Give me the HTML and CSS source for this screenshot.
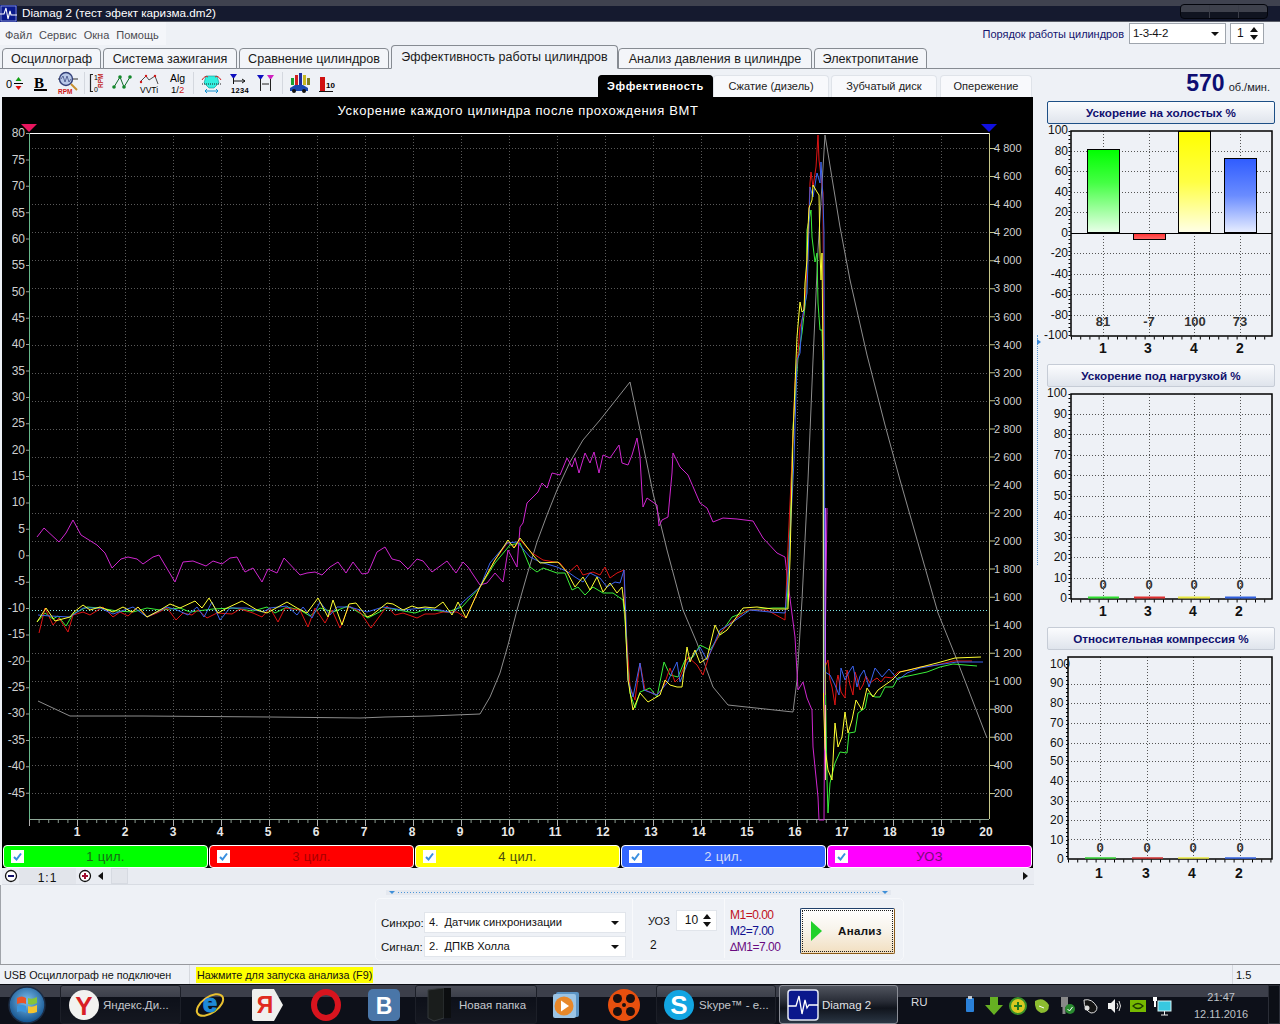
FILE: index.html
```html
<!DOCTYPE html>
<html lang="ru">
<head>
<meta charset="utf-8">
<title>Diamag 2</title>
<link rel="stylesheet" href="styles.css">
</head>
<body>
<header class="titlebar">
  <svg class="app-icon" width="17" height="17" viewBox="0 0 17 17"><rect width="17" height="17" fill="#0a1a8c"/><rect x="1" y="1" width="15" height="15" fill="none" stroke="#c8d0f0" stroke-width=".6"/><path d="M0 9H4L6 3L8 14L10 6L11 10H17" fill="none" stroke="#fff" stroke-width="1.1"/></svg>
  <span class="title-text">Diamag 2 (тест эфект каризма.dm2)</span>
  <div class="win-controls"><i></i><i></i><i></i></div>
</header>

<div class="menubar">
  <nav class="menu"><span>Файл</span><span>Сервис</span><span>Окна</span><span>Помощь</span></nav>
  <div class="order">
    <span class="order-label">Порядок работы цилиндров</span>
    <div class="combo combo-order">1-3-4-2<b class="caret"></b></div>
    <div class="spin spin-order">1<span class="spin-arrows"><b></b><b></b></span></div>
  </div>
</div>

<div class="tabs">
  <span class="tab t1">Осциллограф</span>
  <span class="tab t2">Система зажигания</span>
  <span class="tab t3">Сравнение цилиндров</span>
  <span class="tab active t4">Эффективность работы цилиндров</span>
  <span class="tab t5">Анализ давления в цилиндре</span>
  <span class="tab t6">Электропитание</span>
</div>

<div class="toolbar">
  <svg class="tool-icons" width="598" height="28" viewBox="0 69 598 28" font-family="Liberation Sans, sans-serif">
    <path d="M84.5 72V94M193.5 72V94M282.5 72V94" stroke="#d4d8df"/>
    <text x="6" y="88" font-size="11">0</text>
    <path d="M14 83.5H23" stroke="#000"/><path d="M18.5 77L15.5 81H21.5Z" fill="#12a012"/><path d="M18.5 90L15.5 86H21.5Z" fill="#e01010"/>
    <text x="34" y="88" font-size="15" font-weight="bold" font-family="Liberation Serif, serif">B</text><rect x="34" y="89" width="13" height="2" fill="#000"/>
    <path d="M58 79H78" stroke="#333"/><circle cx="66" cy="79" r="6.5" fill="#b8c8e8" stroke="#33407a" stroke-width="1.4"/><path d="M61 79L63 76L65 82L67 76L69 82L71 79" fill="none" stroke="#33407a" stroke-width=".7"/><path d="M71 84L77 90" stroke="#c89030" stroke-width="2"/>
    <text x="58" y="94" font-size="6.5" fill="#d01818" font-weight="bold">RPM</text>
    <path d="M93 74.5H90.5V91.5H93" fill="none" stroke="#222" stroke-width="1.2"/><text x="94" y="80" font-size="7">1</text><text x="94" y="92" font-size="7">0</text>
    <text transform="translate(103 88) rotate(-90)" font-size="6.5" fill="#c01818" font-weight="bold">RPM</text>
    <path d="M114 87L120 77L124 87L130 77" fill="none" stroke="#0f6a2a"/><g fill="#12882a"><circle cx="114" cy="87" r="1.8"/><circle cx="120" cy="77" r="1.8"/><circle cx="124" cy="87" r="1.8"/><circle cx="130" cy="77" r="1.8"/></g>
    <path d="M140 82L146 76L149 80L155 76L158 84" fill="none" stroke="#222" stroke-width=".8"/><g fill="#d01818"><circle cx="141" cy="82" r="1.2"/><circle cx="146" cy="76" r="1.2"/><circle cx="155" cy="76" r="1.2"/></g>
    <text x="140" y="93" font-size="8.5">VVTi</text>
    <text x="170" y="82" font-size="10.5">Alg</text><text x="171" y="93" font-size="9.5">1/<tspan fill="#d01818">2</tspan></text>
    <path d="M206 76H217L219 83L214 88H209L204 83Z" fill="#30f0e0" stroke="#0a9090" stroke-width=".6"/><path d="M202 80Q205 75 208 77M215 77Q218 75 221 80" fill="none" stroke="#d02020"/><path d="M202 84H221" stroke="#222" stroke-dasharray="1 1"/><path d="M205 91H218M205 91L207 89M205 91L207 93M218 91L216 89M218 91L216 93" stroke="#1090d0" fill="none"/>
    <path d="M230 74H237L233.500 79Z" fill="#1010c0"/><path d="M233.500 78V84" stroke="#111"/><path d="M234 81H245M245 81L242 79M245 81L242 83" stroke="#111" fill="none"/>
    <text x="231" y="93" font-size="7.500" font-weight="bold" letter-spacing=".3">1234</text>
    <path d="M257 75H264L260.500 80Z" fill="#1010c0"/><path d="M267 75H274L270.500 80Z" fill="#d020c0"/><path d="M260.500 79V91M270.500 79V91M262 84H269" stroke="#222" fill="none"/>
    <g><rect x="291" y="78" width="3" height="7" fill="#18a030"/><rect x="295" y="75" width="3" height="10" fill="#d02020"/><rect x="299" y="73" width="3" height="12" fill="#2030a0"/><rect x="303" y="75" width="3" height="10" fill="#c8b820"/><rect x="307" y="78" width="3" height="7" fill="#808020"/></g>
    <path d="M290 91V88L295 85H303L308 88V91Z" fill="#1848b0"/><circle cx="294" cy="91" r="2" fill="#111"/><circle cx="304" cy="91" r="2" fill="#111"/>
    <rect x="320" y="77" width="5" height="14" fill="#d01010"/><text x="326" y="88" font-size="8" font-weight="bold">10</text><path d="M319 91.500H333" stroke="#111"/>
  </svg>
  <div class="subtabs">
    <span class="subtab on st1">Эффективность</span>
    <span class="subtab st2">Сжатие (дизель)</span>
    <span class="subtab st3">Зубчатый диск</span>
    <span class="subtab st4">Опережение</span>
  </div>
  <div class="rpm"><b>570</b><span>об./мин.</span></div>
</div>

<main class="workspace">
  <section class="left">
    <div class="scope">
      <svg class="scope-plot" width="1031" height="748" viewBox="2 97 1031 748" font-family="Liberation Sans, sans-serif">
        <text x="518" y="115" class="chart-title" text-anchor="middle">Ускорение каждого цилиндра после прохождения ВМТ</text>
        <path class="grid" d="M29 148.500H989M29 176.500H989M29 204.500H989M29 232.500H989M29 260.500H989M29 288.500H989M29 316.500H989M29 345.500H989M29 373.500H989M29 401.500H989M29 429.500H989M29 457.500H989M29 485.500H989M29 513.500H989M29 541.500H989M29 569.500H989M29 597.500H989M29 625.500H989M29 653.500H989M29 681.500H989M29 709.500H989M29 737.500H989M29 765.500H989M29 793.500H989M77.500 133V819M125.500 133V819M173.500 133V819M221.500 133V819M269.500 133V819M317.500 133V819M365.500 133V819M413.500 133V819M461.500 133V819M509.500 133V819M557.500 133V819M605.500 133V819M653.500 133V819M701.500 133V819M749.500 133V819M797.500 133V819M845.500 133V819M893.500 133V819M941.500 133V819"/>
        <path d="M29 610.500H989" stroke="#7fe8e8" stroke-dasharray="1 2"/>
        <path d="M29 133.500H989" stroke="#fff"/>
        <path d="M29.500 133V819" stroke="#66b88a"/>
        <path d="M989.500 133V819" stroke="#c8c88a"/>
        <path d="M29 819.500H989" stroke="#8fa898"/>
        <path d="M29 821.500H989" stroke="#8a9a90" stroke-width="3" stroke-dasharray="1 8.600"/>
        <path d="M29 823H989" stroke="#b0b0b0" stroke-width="6" stroke-dasharray="1 47" stroke-dashoffset="-48"/>
        <path d="M27.500 133V795" stroke="#9a9a9a" stroke-width="3" stroke-dasharray="1 25.390"/>
        <path d="M992 148V795" stroke="#c8c88a" stroke-width="6" stroke-dasharray="1 27.040"/>
        <path d="M21 124H37L29 132Z" fill="#e8155e"/>
        <path d="M981 124H997L989 132Z" fill="#1010e0"/>

        <polyline class="ln gray" points="38,701 70,716 143,716 270,717 360,718 385,717 430,716 480,714 490,697 500,673 508,645 517,610 527,575 537,542 547,515 557,490 570,462 583,440 600,420 630,382 640,430 653,493 667,550 683,610 697,643 713,687 728,705 793,712 797,680 802,600 808,480 813,360 818,250 825,135 840,227 850,280 867,355 885,425 900,480 938,613 955,655 987,738"/>
        <polyline class="ln mag" points="37,537 44,528 59,542 66,533 73,520 81,535 97,545 105,553 112,568 121,559 128,557 137,559 143,564 153,557 159,555 175,582 183,562 193,561 206,566 213,561 222,564 230,558 237,557 245,572 253,568 262,582 268,569 277,573 284,558 300,575 307,573 315,572 322,575 330,567 338,562 346,573 353,562 362,574 368,573 377,552 385,547 392,559 400,561 408,569 417,559 423,561 432,572 447,561 456,573 463,562 468,567 480,585 487,583 495,573 503,582 508,550 517,567 520,527 523,523 527,503 538,492 542,483 547,488 552,473 560,475 567,458 572,467 575,458 579,473 585,453 590,463 594,452 599,473 603,455 610,458 619,445 622,463 628,465 632,455 637,438 640,457 642,493 643,507 647,498 657,505 659,526 662,520 668,517 672,473 673,453 680,467 688,475 700,503 707,508 713,522 723,518 737,519 753,521 763,538 777,553 785,557 788,583 795,637 798,690 803,682 807,698 812,710 813,747 818,797 819,820 824,820 825,660 827,508"/>
        <polyline class="ln grn" points="37,622 45,613 53,619 58,616 66,626 73,614 87,607 100,608 117,611 133,612 147,608 160,610 180,608 190,612 213,609 233,608 253,611 267,607 275,613 287,607 300,610 310,616 320,608 333,612 348,606 368,618 387,608 415,613 427,609 447,612 462,607 480,587 495,563 510,545 520,543 530,567 537,572 543,568 557,573 565,573 572,590 578,587 585,595 593,587 603,593 613,593 623,600 625,620 627,653 630,693 635,708 640,692 650,688 657,697 664,662 670,675 678,677 685,660 693,657 700,645 710,650 723,630 732,617 750,610 773,608 787,608 790,527 793,427 798,358 802,333 806,297 807,230 811,210 812,237 815,262 817,253 818,303 820,330 822,330 823,360 824,600 827,780 828,813 830,783 835,763 840,752 847,753 849,733 855,732 858,713 865,708 868,693 875,697 880,697 885,687 893,687 898,678 913,675 927,672 940,667 953,664 977,666"/>
        <polyline class="ln red" points="39,633 45,608 53,625 59,618 68,632 73,615 83,612 90,615 103,607 113,617 120,612 128,616 138,607 147,617 157,613 167,608 176,620 183,613 192,615 198,610 207,618 217,613 232,614 240,609 253,613 262,617 270,608 278,622 285,608 300,610 308,627 315,608 325,623 332,610 340,628 349,606 360,612 371,628 387,606 395,615 403,613 417,618 425,614 435,614 443,612 457,612 466,618 480,587 495,560 508,542 515,547 520,540 532,553 543,560 560,563 568,573 577,565 583,575 593,572 600,575 605,567 610,578 617,573 624,570 625,613 627,643 630,687 635,700 640,663 645,690 657,695 663,688 670,668 675,682 680,677 688,657 697,665 703,675 710,653 720,633 730,623 747,610 767,610 785,620 788,547 792,460 795,383 798,353 800,327 803,317 806,287 807,262 810,183 811,172 813,187 816,167 818,135 819,160 823,193 824,450 825,667 828,660 830,680 832,687 835,705 837,680 838,675 841,692 845,698 847,670 850,685 853,695 855,672 857,678 860,690 863,685 866,676 870,683 874,680 877,678 881,682 885,677 892,678 898,672 910,670 920,667 937,665 953,661 972,661"/>
        <polyline class="ln blu" points="38,615 50,616 70,617 83,608 100,608 113,614 133,607 147,617 167,607 177,610 188,615 197,607 204,617 212,602 220,620 230,608 247,608 263,612 270,608 287,606 297,615 303,607 312,618 320,602 330,615 337,607 350,607 367,612 383,607 403,610 423,608 440,610 453,613 463,602 480,587 490,563 507,543 517,542 530,557 540,562 557,567 568,572 575,577 583,582 590,573 600,578 607,587 615,582 620,583 624,570 626,620 628,680 633,697 640,663 644,690 657,695 667,683 677,662 680,682 688,662 700,647 707,660 720,630 733,622 750,610 770,612 785,613 788,577 794,460 797,360 800,353 802,320 807,293 808,260 810,187 813,197 817,173 820,183 821,162 823,200 824,233 825,672 830,675 835,685 839,695 841,668 845,680 849,672 853,666 857,687 860,676 864,670 869,687 875,668 882,677 889,669 898,680 907,673 920,668 937,665 957,662 983,662"/>
        <polyline class="ln yel" points="37,622 46,608 55,621 70,617 74,612 83,605 90,610 100,607 113,612 123,607 132,612 138,607 147,617 160,610 170,604 180,608 195,601 202,608 209,598 218,613 227,608 242,601 257,610 267,613 287,602 297,608 307,613 318,598 328,617 333,600 342,625 349,604 356,603 367,617 372,615 387,603 393,604 403,610 412,606 418,608 425,607 435,608 443,602 452,615 458,602 466,618 480,587 495,560 508,540 514,548 520,538 533,555 540,563 558,562 567,572 575,587 583,577 590,590 597,577 603,592 610,583 617,593 622,587 625,613 626,637 628,680 633,710 640,693 648,702 660,695 665,680 670,685 677,687 682,687 687,647 690,662 695,650 700,663 707,658 715,625 720,635 727,630 733,622 743,608 757,607 773,609 788,609 790,560 793,437 796,360 797,337 800,302 802,312 804,310 805,283 807,260 808,228 809,208 812,200 813,185 817,192 819,195 820,253 821,280 822,253 823,360 823.500,700 825,748 828,770 832,780 835,723 838,747 842,737 845,712 848,733 852,720 856,700 862,710 867,688 873,697 878,690 885,685 892,680 900,672 917,668 937,663 955,658 981,657"/>
        <path d="M823.500 360V693" stroke="#c4e8a8"/>
        <path d="M825.500 508V663" stroke="#c060f8"/>
        <path d="M825.500 663V695" stroke="#b0b060"/>
        <path d="M825.500 705V780" stroke="#ffc4a4"/>

        <g class="ax-l" text-anchor="end">
          <text x="25" y="137">80</text><text x="25" y="164">75</text><text x="25" y="190">70</text><text x="25" y="217">65</text><text x="25" y="243">60</text><text x="25" y="269">55</text><text x="25" y="296">50</text><text x="25" y="322">45</text><text x="25" y="348">40</text><text x="25" y="375">35</text><text x="25" y="401">30</text><text x="25" y="427">25</text><text x="25" y="454">20</text><text x="25" y="480">15</text><text x="25" y="506">10</text><text x="25" y="533">5</text><text x="25" y="559">0</text><text x="25" y="585">-5</text><text x="25" y="612">-10</text><text x="25" y="638">-15</text><text x="25" y="665">-20</text><text x="25" y="691">-25</text><text x="25" y="717">-30</text><text x="25" y="744">-35</text><text x="25" y="770">-40</text><text x="25" y="797">-45</text>
        </g>
        <g class="ax-r">
          <text x="994" y="152">4 800</text><text x="994" y="180">4 600</text><text x="994" y="208">4 400</text><text x="994" y="236">4 200</text><text x="994" y="264">4 000</text><text x="994" y="292">3 800</text><text x="994" y="321">3 600</text><text x="994" y="349">3 400</text><text x="994" y="377">3 200</text><text x="994" y="405">3 000</text><text x="994" y="433">2 800</text><text x="994" y="461">2 600</text><text x="994" y="489">2 400</text><text x="994" y="517">2 200</text><text x="994" y="545">2 000</text><text x="994" y="573">1 800</text><text x="994" y="601">1 600</text><text x="994" y="629">1 400</text><text x="994" y="657">1 200</text><text x="994" y="685">1 000</text><text x="994" y="713">800</text><text x="994" y="741">600</text><text x="994" y="769">400</text><text x="994" y="797">200</text>
        </g>
        <g class="ax-b" text-anchor="middle">
          <text x="77" y="836">1</text><text x="125" y="836">2</text><text x="173" y="836">3</text><text x="220" y="836">4</text><text x="268" y="836">5</text><text x="316" y="836">6</text><text x="364" y="836">7</text><text x="412" y="836">8</text><text x="460" y="836">9</text><text x="508" y="836">10</text><text x="555" y="836">11</text><text x="603" y="836">12</text><text x="651" y="836">13</text><text x="699" y="836">14</text><text x="747" y="836">15</text><text x="795" y="836">16</text><text x="842" y="836">17</text><text x="890" y="836">18</text><text x="938" y="836">19</text><text x="986" y="836">20</text>
        </g>
      </svg>
      <div class="legend">
        <div class="lg lg-g"><span class="chk"><svg width="9" height="9" viewBox="0 0 9 9"><path d="M1 5L3.500 7.500L8 1.500" fill="none" stroke="#3a8fe0" stroke-width="2"/></svg></span><span class="lg-t">1 цил.</span></div>
        <div class="lg lg-r"><span class="chk"><svg width="9" height="9" viewBox="0 0 9 9"><path d="M1 5L3.500 7.500L8 1.500" fill="none" stroke="#3a8fe0" stroke-width="2"/></svg></span><span class="lg-t">3 цил.</span></div>
        <div class="lg lg-y"><span class="chk"><svg width="9" height="9" viewBox="0 0 9 9"><path d="M1 5L3.500 7.500L8 1.500" fill="none" stroke="#3a8fe0" stroke-width="2"/></svg></span><span class="lg-t">4 цил.</span></div>
        <div class="lg lg-b"><span class="chk"><svg width="9" height="9" viewBox="0 0 9 9"><path d="M1 5L3.500 7.500L8 1.500" fill="none" stroke="#3a8fe0" stroke-width="2"/></svg></span><span class="lg-t">2 цил.</span></div>
        <div class="lg lg-m"><span class="chk"><svg width="9" height="9" viewBox="0 0 9 9"><path d="M1 5L3.500 7.500L8 1.500" fill="none" stroke="#3a8fe0" stroke-width="2"/></svg></span><span class="lg-t">УОЗ</span></div>
      </div>
    </div>
    <div class="scrollrow">
      <span class="zoom-btn"><svg width="14" height="14" viewBox="0 0 14 14"><circle cx="7" cy="7" r="5.500" fill="#fff" stroke="#111" stroke-width="1.300"/><path d="M4 7H10" stroke="#10106a" stroke-width="2"/></svg></span>
      <span class="ratio">1:1</span>
      <span class="zoom-btn"><svg width="14" height="14" viewBox="0 0 14 14"><circle cx="7" cy="7" r="5.500" fill="#fff" stroke="#111" stroke-width="1.300"/><path d="M4 7H10M7 4V10" stroke="#a01030" stroke-width="2"/></svg></span>
      <span class="arr-l"></span>
      <span class="thumb"></span>
      <span class="track"></span>
      <span class="arr-r"></span>
    </div>
  </section>

  <div class="vsplit"><span class="vsplit-mark"></span></div>

  <aside class="right">
    <svg width="0" height="0" class="defs">
      <defs>
        <linearGradient id="gg" x1="0" y1="0" x2="0" y2="1"><stop offset="0" stop-color="#00ff00"/><stop offset=".4" stop-color="#44ff44"/><stop offset="1" stop-color="#eaffea"/></linearGradient>
        <linearGradient id="gy" x1="0" y1="0" x2="0" y2="1"><stop offset="0" stop-color="#ffff00"/><stop offset=".5" stop-color="#ffff44"/><stop offset="1" stop-color="#ffffe8"/></linearGradient>
        <linearGradient id="gb" x1="0" y1="0" x2="0" y2="1"><stop offset="0" stop-color="#2f5cff"/><stop offset=".5" stop-color="#6a8cff"/><stop offset="1" stop-color="#e8eeff"/></linearGradient>
        <linearGradient id="gr" x1="0" y1="0" x2="0" y2="1"><stop offset="0" stop-color="#ff3030"/><stop offset="1" stop-color="#ff6a6a"/></linearGradient>
      </defs>
    </svg>

    <div class="panel">
      <div class="panel-head focus">Ускорение на холостых %</div>
      <svg width="236" height="237" viewBox="1044 124 236 237" class="bar-chart" font-family="Liberation Sans, sans-serif">
        <path class="bgrid" d="M1071 151.500H1272M1071 171.500H1272M1071 192.500H1272M1071 212.500H1272M1071 253.500H1272M1071 274.500H1272M1071 294.500H1272M1071 315.500H1272M1103.500 131V336M1149.500 131V336M1194.500 131V336M1240.500 131V336"/>
        <rect x="1087.500" y="149.500" width="32" height="83" fill="url(#gg)" stroke="#000"/>
        <rect x="1133.500" y="233.500" width="32" height="6" fill="url(#gr)" stroke="#000"/>
        <rect x="1178.500" y="131.500" width="32" height="101" fill="url(#gy)" stroke="#000"/>
        <rect x="1224.500" y="158.500" width="32" height="74" fill="url(#gb)" stroke="#000"/>
        <path d="M1071 233.500H1272" stroke="#000"/>
        <rect x="1071" y="131" width="201" height="205" fill="none" stroke="#000" stroke-width="1.500"/>
        <path d="M1069.500 131V336" stroke="#000" stroke-width="2" stroke-dasharray="1 3"/>
        <path d="M1071 338H1272" stroke="#000" stroke-width="3" stroke-dasharray="1 8.200"/>
        <g class="by" text-anchor="end"><text x="1068" y="134">100</text><text x="1068" y="155">80</text><text x="1068" y="175">60</text><text x="1068" y="196">40</text><text x="1068" y="216">20</text><text x="1068" y="237">0</text><text x="1068" y="257">-20</text><text x="1068" y="278">-40</text><text x="1068" y="298">-60</text><text x="1068" y="319">-80</text><text x="1068" y="339">-100</text></g>
        <g class="bv" text-anchor="middle"><text x="1103" y="326">81</text><text x="1149" y="326">-7</text><text x="1195" y="326">100</text><text x="1240" y="326">73</text></g>
        <g class="bx" text-anchor="middle"><text x="1103" y="353">1</text><text x="1148" y="353">3</text><text x="1194" y="353">4</text><text x="1240" y="353">2</text></g>
      </svg>
    </div>

    <div class="panel">
      <div class="panel-head">Ускорение под нагрузкой %</div>
      <svg width="236" height="237" viewBox="1044 387 236 237" class="bar-chart" font-family="Liberation Sans, sans-serif">
        <path class="bgrid" d="M1071 414.500H1272M1071 434.500H1272M1071 455.500H1272M1071 475.500H1272M1071 496.500H1272M1071 516.500H1272M1071 537.500H1272M1071 557.500H1272M1071 578.500H1272M1103.500 394V599M1149.500 394V599M1194.500 394V599M1240.500 394V599"/>
        <rect x="1071" y="394" width="201" height="205" fill="none" stroke="#000" stroke-width="1.500"/>
        <path d="M1069.500 394V599" stroke="#000" stroke-width="2" stroke-dasharray="1 3"/>
        <path d="M1071 601H1272" stroke="#000" stroke-width="3" stroke-dasharray="1 8.200"/>
        <path d="M1088 597.500H1119" stroke="#30e030" stroke-width="2"/><path d="M1134 597.500H1165" stroke="#e03030" stroke-width="2"/><path d="M1178 597.500H1210" stroke="#e8e840" stroke-width="2"/><path d="M1225 597.500H1256" stroke="#3060e0" stroke-width="2"/>
        <g class="by" text-anchor="end"><text x="1067" y="397">100</text><text x="1067" y="418">90</text><text x="1067" y="438">80</text><text x="1067" y="459">70</text><text x="1067" y="479">60</text><text x="1067" y="500">50</text><text x="1067" y="520">40</text><text x="1067" y="541">30</text><text x="1067" y="561">20</text><text x="1067" y="582">10</text><text x="1067" y="602">0</text></g>
        <g class="bv" text-anchor="middle"><text x="1103" y="589">0</text><text x="1149" y="589">0</text><text x="1194" y="589">0</text><text x="1240" y="589">0</text></g>
        <g class="bx" text-anchor="middle"><text x="1103" y="616">1</text><text x="1148" y="616">3</text><text x="1193" y="616">4</text><text x="1239" y="616">2</text></g>
      </svg>
    </div>

    <div class="panel last">
      <div class="panel-head">Относительная компрессия %</div>
      <svg width="236" height="235" viewBox="1044 650 236 235" class="bar-chart" font-family="Liberation Sans, sans-serif">
        <path class="bgrid" d="M1068 684.500H1272M1068 703.500H1272M1068 723.500H1272M1068 743.500H1272M1068 761.500H1272M1068 781.500H1272M1068 801.500H1272M1068 820.500H1272M1068 839.500H1272M1100.500 657V859M1147.500 657V859M1193.500 657V859M1240.500 657V859"/>
        <rect x="1068" y="657" width="204" height="202" fill="none" stroke="#000" stroke-width="1.500"/>
        <path d="M1067 664V859" stroke="#000" stroke-width="2" stroke-dasharray="1 3"/>
        <path d="M1068 861H1272" stroke="#000" stroke-width="3" stroke-dasharray="1 8.200"/>
        <path d="M1085 858H1116" stroke="#30d030" stroke-width="1.500"/><path d="M1132 858H1163" stroke="#d03030" stroke-width="1.500"/><path d="M1178 858H1209" stroke="#e8e840" stroke-width="1.500"/><path d="M1225 858H1256" stroke="#3060e0" stroke-width="1.500"/>
        <g class="by"><text x="1050" y="668">100</text><text x="1050" y="687">90</text><text x="1050" y="707">80</text><text x="1050" y="727">70</text><text x="1050" y="747">60</text><text x="1050" y="765">50</text><text x="1050" y="785">40</text><text x="1050" y="805">30</text><text x="1050" y="824">20</text><text x="1050" y="844">10</text><text x="1057" y="863">0</text></g>
        <g class="bv" text-anchor="middle"><text x="1100" y="852">0</text><text x="1147" y="852">0</text><text x="1193" y="852">0</text><text x="1240" y="852">0</text></g>
        <g class="bx" text-anchor="middle"><text x="1099" y="878">1</text><text x="1146" y="878">3</text><text x="1192" y="878">4</text><text x="1239" y="878">2</text></g>
      </svg>
    </div>
  </aside>
</main>

<section class="bottom">
  <div class="hsplit"><i></i></div>
  <div class="controls">
    <div class="ctl-sel">
      <div class="ctl-row"><label>Синхро:</label><div class="combo combo-wide">4.&nbsp; Датчик синхронизации<b class="caret"></b></div></div>
      <div class="ctl-row"><label>Сигнал:</label><div class="combo combo-wide">2.&nbsp; ДПКВ Холла<b class="caret"></b></div></div>
    </div>
    <div class="ctl-uoz">
      <div class="uoz-row"><span>УОЗ</span><div class="spin spin-uoz">10<span class="spin-arrows"><b></b><b></b></span></div></div>
      <div class="uoz-val">2</div>
    </div>
    <div class="ctl-m">
      <div class="m1">M1=0.00</div>
      <div class="m2">M2=7.00</div>
      <div class="m3">∆M1=7.00</div>
    </div>
    <button class="analyze" type="button"><i class="play"></i><span>Анализ</span></button>
  </div>
</section>

<footer class="status">
  <span class="st-usb">USB Осциллограф не подключен</span>
  <span class="st-hint"><em>Нажмите для запуска анализа (F9)</em></span>
  <span class="st-ver">1.5</span>
</footer>

<div class="taskbar">
  <div class="start">
    <svg width="40" height="40" viewBox="0 0 40 40"><defs><radialGradient id="orb" cx=".5" cy=".4" r=".6"><stop offset="0" stop-color="#7fc0ee"/><stop offset="1" stop-color="#10508c"/></radialGradient></defs><circle cx="20" cy="20" r="18" fill="url(#orb)" stroke="#1c2c44" stroke-width="1.500"/><path d="M10 13Q15 10 19 13V19Q15 17 10 19Z" fill="#e8542a"/><path d="M21 13Q25 15 30 12V18Q25 21 21 19Z" fill="#86c43a"/><path d="M10 21Q15 19 19 21V28Q15 25 10 27Z" fill="#3a94dc"/><path d="M21 21Q25 23 30 20V27Q25 29 21 28Z" fill="#f4c430"/></svg>
  </div>
  <div class="tb-btn">
    <svg width="30" height="30" viewBox="0 0 30 30" font-family="Liberation Sans, sans-serif"><circle cx="15" cy="15" r="15" fill="#f2f2f0"/><text x="15" y="25" font-size="26" font-weight="bold" fill="#d91f26" text-anchor="middle">Y</text></svg>
    <span>Яндекс.Ди...</span>
  </div>
  <div class="tb-slot"><svg width="32" height="32" viewBox="0 0 32 32" font-family="Liberation Sans, sans-serif"><ellipse cx="16" cy="16" rx="15" ry="8" transform="rotate(-35 16 16)" fill="none" stroke="#e8c030" stroke-width="2"/><text x="16" y="23" font-size="26" font-weight="bold" fill="#1e8ad8" stroke="#1e8ad8" text-anchor="middle">e</text></svg></div>
  <div class="tb-slot"><svg width="32" height="32" viewBox="0 0 32 32" font-family="Liberation Sans, sans-serif"><path d="M2 0H22L31 16L22 32H2Q0 32 0 30V2Q0 0 2 0Z" fill="#f0f0ee"/><text x="13" y="24" font-size="23" font-weight="bold" fill="#e02a20" text-anchor="middle">Я</text></svg></div>
  <div class="tb-slot"><svg width="32" height="32" viewBox="0 0 32 32"><ellipse cx="16" cy="16" rx="12" ry="13" fill="none" stroke="#d8141e" stroke-width="6"/></svg></div>
  <div class="tb-slot"><svg width="32" height="32" viewBox="0 0 32 32" font-family="Liberation Sans, sans-serif"><rect width="32" height="32" rx="5" fill="#4a76a8"/><text x="16" y="25" font-size="23" font-weight="bold" fill="#fff" text-anchor="middle">В</text></svg></div>
  <div class="tb-btn folder">
    <svg width="30" height="34" viewBox="0 0 30 34"><path d="M4 2L20 0V30L10 33L4 30Z" fill="#1a1d1c" stroke="#33383a"/><path d="M20 0H27V30H20Z" fill="#0c0e10"/></svg>
    <span>Новая папка</span>
  </div>
  <div class="tb-slot"><svg width="28" height="28" viewBox="0 0 28 28"><rect x="4" y="1" width="23" height="25" rx="2" fill="#5c94c4"/><rect x="1" y="3" width="23" height="24" rx="2" fill="#9cc4e4"/><circle cx="12" cy="15" r="9.500" fill="#e8882a"/><path d="M9 9.500L17 15L9 20.500Z" fill="#fff"/></svg></div>
  <div class="tb-slot"><svg width="32" height="32" viewBox="0 0 32 32"><circle cx="16" cy="16" r="16" fill="#e8500e"/><g fill="#181010"><circle cx="9.500" cy="9.500" r="4.500"/><circle cx="22.500" cy="9.500" r="4.500"/><circle cx="9.500" cy="22.500" r="4.500"/><circle cx="22.500" cy="22.500" r="4.500"/><circle cx="16" cy="16" r="2"/></g></svg></div>
  <div class="tb-btn skype">
    <svg width="30" height="30" viewBox="0 0 30 30" font-family="Liberation Sans, sans-serif"><circle cx="15" cy="15" r="15" fill="#12a5e2"/><text x="15" y="24" font-size="26" font-weight="bold" fill="#fff" text-anchor="middle">S</text></svg>
    <span>Skype™ - e...</span>
  </div>
  <div class="tb-btn active-app">
    <svg width="32" height="32" viewBox="0 0 32 32"><rect x="1" y="1" width="30" height="30" rx="3" fill="#0a188c" stroke="#e4e8f4" stroke-width="1.500"/><path d="M1 17H9L12 7L15 25L18 11L20 19L22 16H31" fill="none" stroke="#fff" stroke-width="1.300"/></svg>
    <span>Diamag 2</span>
  </div>
  <span class="lang">RU</span>
  <div class="tray">
    <svg width="24" height="24" viewBox="0 0 24 24"><rect x="8" y="4" width="8" height="14" rx="1" fill="#2a80d8"/><rect x="10" y="2" width="4" height="3" fill="#c0c8d0"/></svg>
    <svg width="24" height="24" viewBox="0 0 24 24"><path d="M8 3H16V11H21L12 21L3 11H8Z" fill="#66b022"/></svg>
    <svg width="24" height="24" viewBox="0 0 24 24"><circle cx="12" cy="12" r="8" fill="#d8c820" stroke="#3a9028" stroke-width="2"/><path d="M8 12H16M12 8V16" stroke="#1f7a20" stroke-width="2"/></svg>
    <svg width="24" height="24" viewBox="0 0 24 24"><path d="M5 7Q13 2 19 11Q19 19 11 19Q4 16 5 7Z" fill="#8cbc30"/><path d="M9 12L14 14" stroke="#fff"/></svg>
    <svg width="24" height="24" viewBox="0 0 24 24"><rect x="7" y="3" width="7" height="10" fill="#888"/><path d="M10 13V20" stroke="#888" stroke-width="3"/><circle cx="16" cy="15" r="5" fill="#2a8a30"/><path d="M13.500 15L15.500 17L18.500 13" stroke="#fff" fill="none"/></svg>
    <svg width="24" height="24" viewBox="0 0 24 24"><path d="M6 6Q14 4 19 13Q19 19 13 19Q6 16 6 6Z" fill="#141414" stroke="#ddd"/><circle cx="9" cy="14" r="2.500" fill="#ddd"/></svg>
    <svg width="24" height="24" viewBox="0 0 24 24"><path d="M6 9H9L13 5V19L9 15H6Z" fill="#f0f0f0"/><path d="M15 9Q17 12 15 15M17 7Q20 12 17 17" stroke="#ddd" fill="none"/></svg>
    <svg width="24" height="24" viewBox="0 0 24 24"><rect x="4" y="6" width="16" height="12" fill="#76b900"/><path d="M7 12Q12 7 17 12Q12 17 7 12Z" fill="none" stroke="#1d3a00" stroke-width="1.300"/></svg>
    <svg width="24" height="24" viewBox="0 0 24 24"><rect x="8" y="7" width="13" height="10" fill="#38c8e0" stroke="#d8f0f4"/><path d="M11 21H18M14.500 17V21" stroke="#eee"/><path d="M5 4V13" stroke="#fff" stroke-width="2"/><rect x="3" y="3" width="4" height="4" fill="#fff"/></svg>
  </div>
  <div class="clock"><span>21:47</span><span>12.11.2016</span></div>
  <span class="show-desktop"></span>
</div>
</body>
</html>
```
FILE: styles.css
```css
* { box-sizing: border-box; }
html, body { margin: 0; padding: 0; }
body {
  width: 1280px; height: 1024px; overflow: hidden;
  display: flex; flex-direction: column;
  background: #eef1f6; color: #111;
  font-family: "Liberation Sans", Arial, sans-serif; font-size: 12px;
}
svg { display: block; }

.titlebar {
  height: 22px; flex: none; display: flex; align-items: center;
  background: linear-gradient(#3f424f 0 6px, #151a2f 6px 21px, #5a5e68 21px);
  color: #fff;
}
.app-icon { margin-left: 0; margin-top: 4px; }
.title-text { margin-left: 5px; margin-top: 2px; font-size: 11.700px; }
.win-controls {
  margin-left: auto; margin-right: 12px; width: 88px; height: 15px; display: flex;
  border: 1px solid #03050c; border-radius: 4px;
  background: linear-gradient(#3e414c 0 7px, #101420 7px);
}
.win-controls i { flex: 1; border-right: 1px solid #3a3d48; }
.win-controls i:last-child { border: 0; }

.menubar { height: 24px; flex: none; display: flex; align-items: flex-start; justify-content: space-between; }
.menu { width: 166px; height: 23px; background: #f4f6fa; display: flex; gap: 7px; padding: 7px 0 0 5px; font-size: 11px; color: #4c4c52; }
.order { display: flex; align-items: center; height: 22px; padding-right: 16px; }
.order-label { color: #14146e; font-size: 11px; margin-right: 5px; padding-top: 2px; letter-spacing: -.04px; }
.combo {
  position: relative; background: #fff; border: 1px solid #9fa5ad; height: 21px; line-height: 19px;
  padding-left: 3px; font-size: 11.500px;
}
.combo-order { width: 97px; letter-spacing: -.3px; }
.caret { position: absolute; right: 6px; top: 8px; border: 4px solid transparent; border-top: 4px solid #111; border-left-width: 4px; border-right-width: 4px; }
.spin { position: relative; background: #fff; border: 1px solid #9fa5ad; height: 21px; line-height: 19px; font-size: 12px; padding-left: 6px; }
.spin-order { width: 34px; margin-left: 4px; }
.spin-arrows { position: absolute; right: 5px; top: 3px; display: flex; flex-direction: column; gap: 3px; }
.spin-arrows b { width: 0; height: 0; border: 4px solid transparent; border-bottom: 5px solid #111; border-top: 0; }
.spin-arrows b + b { border-top: 5px solid #111; border-bottom: 0; }

.tabs { height: 23px; flex: none; display: flex; align-items: flex-end; padding-left: 2px; border-bottom: 1px solid #868b92; }
.tab {
  height: 21px; margin-bottom: -1px; background: #f3f5f9; border: 1px solid #868b92; border-radius: 4px 4px 0 0;
  text-align: center; line-height: 20px; font-size: 12.600px; color: #1b1b1b; margin-right: 2px;
}
.tab.active { height: 24px; background: #eef1f6; border-bottom-color: #eef1f6; line-height: 22px; margin-right: 0; font-size: 12.500px; }
.t1 { width: 99px; } .t2 { width: 134px; } .t3 { width: 150px; } .t4 { width: 227px; }
.t5 { width: 194px; } .t6 { width: 113px; }

.toolbar { height: 28px; flex: none; display: flex; }
.tool-icons { flex: none; }
.subtabs { display: flex; padding-top: 6px; gap: 0; }
.subtab {
  height: 22px; background: #f8f9fc; border: 1px solid #dfe3e9; border-bottom: 0; border-radius: 4px 4px 0 0;
  font-size: 11px; text-align: center; line-height: 20px; color: #222; margin-right: 2px; letter-spacing: .05px;
}
.subtab.on { background: #000; color: #fff; font-weight: bold; border-color: #000; letter-spacing: .6px; margin-right: 0; }
.st1 { width: 115px; } .st2 { width: 116px; } .st3 { width: 106px; } .st4 { width: 92px; margin-left: 1px; }
.rpm { margin-left: auto; padding-right: 10px; display: flex; align-items: baseline; gap: 4px; padding-top: 1px; }
.rpm b { font-size: 23px; color: #0d0d72; }
.rpm span { font-size: 11px; color: #1a1a2a; }

.workspace { height: 788px; flex: none; display: flex; padding-left: 2px; }
.left { width: 1032px; flex: none; display: flex; flex-direction: column; }
.scope { background: #000; width: 1031px; height: 771px; flex: none; }
.scope-plot { display: block; }
.chart-title { fill: #fff; font-size: 13px; letter-spacing: .62px; }
.grid { fill: none; stroke: #5a5a5a; stroke-dasharray: 1 2; }
.ln { fill: none; stroke-width: 1; stroke-linejoin: round; }
.gray { stroke: #8d8d8d; }
.mag { stroke: #cf26cf; }
.grn { stroke: #3aef3a; }
.red { stroke: #e01414; }
.blu { stroke: #3b64ee; }
.yel { stroke: #ffff33; }
.ax-l text { fill: #cfcfcf; font-size: 12px; }
.ax-r text { fill: #cfcfcf; font-size: 11px; }
.ax-b text { fill: #e8e8e8; font-size: 12px; font-weight: bold; }

.legend { display: flex; gap: 1px; padding-left: 1px; height: 23px; }
.lg { width: 205px; height: 23px; border: 1px solid #fff; border-radius: 4px; display: flex; align-items: center; padding-left: 7px; font-size: 13px; letter-spacing: .3px; }
.chk { width: 13px; height: 13px; background: #fff; display: flex; align-items: center; justify-content: center; flex: none; }
.lg-t { flex: 1; text-align: center; padding-right: 20px; }
.lg-g { background: #00ff00; color: #176a17; }
.lg-r { background: #ff0000; color: #a80000; }
.lg-y { background: #ffff00; color: #4a4a10; }
.lg-b { background: #3366ff; color: #d4def8; }
.lg-m { background: #ff00ff; color: #7a0c7a; }

.scrollrow { height: 17px; flex: none; display: flex; align-items: center; background: #e9ecf2; border-bottom: 1px solid #d8dce3; }
.zoom-btn { width: 17px; display: flex; justify-content: center; }
.ratio { width: 57px; height: 16px; background: #e2e5eb; text-align: center; line-height: 20px; font-size: 12px; letter-spacing: 1px; }
.arr-l { width: 0; height: 0; margin: 0 5px 0 5px; border: 4px solid transparent; border-right: 5px solid #111; border-left: 0; }
.arr-r { width: 0; height: 0; margin-right: 6px; border: 4px solid transparent; border-left: 5px solid #111; border-right: 0; }
.thumb { width: 17px; height: 16px; margin-left: 3px; background: #e2e5eb; border: 1px solid #d6dae1; }
.track { flex: 1; }

.vsplit { width: 10px; flex: none; position: relative; }
.vsplit-mark { position: absolute; left: 3px; top: 238px; height: 230px; border-left: 1px dotted #5b9bd8; }
.vsplit-mark::before { content: ""; position: absolute; left: -1px; top: 4px; border: 3px solid transparent; border-left: 4px solid #3a88d8; }

.right { width: 236px; flex: none; display: flex; flex-direction: column; padding-top: 4px; }
.defs { position: absolute; }
.panel { height: 263px; flex: none; }
.panel-head {
  width: 228px; height: 23px; margin-left: 3px; text-align: center; line-height: 22px;
  font-size: 11.700px; font-weight: bold; color: #10106e;
  background: linear-gradient(#fbfcfe, #dfe4ec); border: 1px solid #c6ccd6; border-radius: 2px;
}
.panel-head.focus { border-color: #1d4f86; }
.bgrid { fill: none; stroke: #555; stroke-dasharray: 1 2; }
.by text { font-size: 12px; fill: #111; }
.bv text { font-size: 13px; font-weight: bold; fill: #333; }
.bx text { font-size: 14px; font-weight: bold; fill: #111; }

.bottom { height: 79px; flex: none; display: flex; flex-direction: column; align-items: flex-start; padding-left: 374px; border-left: 1px solid #a0a4aa; }
.hsplit { width: 505px; height: 5px; margin: 5px 0 0 11px; background: #e4e8ef; position: relative; }
.hsplit::before, .hsplit::after { content: ""; position: absolute; top: 1px; border: 3px solid transparent; border-top: 3px solid #3f8fd8; border-bottom: 0; }
.hsplit::before { left: 3px; }
.hsplit::after { right: 3px; }
.hsplit i { position: absolute; left: 12px; right: 12px; top: 2px; height: 1px; background: repeating-linear-gradient(90deg, #4d96d8 0 1px, transparent 1px 3px); }
.controls {
  width: 529px; height: 63px; margin-top: 3px; display: flex; padding-left: 5px; align-items: stretch;
  background: #eef1f6; border: 1px solid #f6f8fb; border-radius: 5px;
}
.ctl-sel { width: 252px; padding-top: 13px; display: flex; flex-direction: column; gap: 3px; border-right: 1px solid #f8f9fb; margin: 0 0 2px; }
.ctl-row { display: flex; align-items: center; height: 21px; }
.ctl-row label { width: 43px; font-size: 11.500px; padding-top: 1px; }
.combo-wide { width: 202px; padding-left: 4px; border-color: #e1e5eb; font-size: 11.200px; }
.ctl-uoz { width: 92px; padding: 11px 0 0 15px; border-right: 1px solid #f8f9fb; margin-bottom: 2px; }
.uoz-row { display: flex; align-items: center; gap: 6px; font-size: 11px; }
.spin-uoz { width: 41px; border-color: #e1e5eb; padding-left: 8px; }
.uoz-val { margin: 5px 0 0 2px; font-size: 12px; padding-top: 2px; }
.ctl-m { width: 69px; padding: 8px 0 0 5px; font-size: 12px; line-height: 16px; letter-spacing: -.5px; }
.m1 { color: #c01020; } .m2 { color: #101090; } .m3 { color: #6a0a80; }
.analyze {
  width: 95px; height: 46px; margin: 9px 0 0 6px; padding: 0 0 0 10px; display: flex; align-items: center;
  border: 1px solid #1f3f6a; border-bottom-color: #8a5a18; border-right-color: #8a5a18; border-radius: 2px;
  outline: 1px dotted #1c1c1c; outline-offset: -3px;
  background: linear-gradient(#ffffff, #f8f4ec 45%, #f2dfc0);
  font: bold 11.500px "Liberation Sans", sans-serif; color: #111;
}
.play { width: 0; height: 0; border: 10px solid transparent; border-left: 11px solid #22d12a; border-right: 0; }
.analyze span { margin-left: 16px; letter-spacing: .35px; }

.status { height: 20px; flex: none; display: flex; align-items: center; border-top: 1px solid #97999e; background: #eef1f6; font-size: 10.800px; }
.st-usb { width: 190px; height: 19px; line-height: 20px; padding-left: 4px; border-right: 1px solid #d6d9df; flex: none; }
.st-hint { padding-left: 6px; flex: 1; }
.st-hint em { font-style: normal; background: #ffff00; padding: 2px 1px; display: inline-block; }
.st-ver { width: 48px; height: 19px; line-height: 20px; padding-left: 3px; border-left: 1px solid #d6d9df; font-size: 11px; }

.taskbar {
  height: 40px; flex: none; display: flex; align-items: stretch; color: #d8dadf; font-size: 11.500px;
  background: linear-gradient(#3c3f4a 0 12px, #0d1019 12px);
  border-top: 1px solid #0a0c12;
}
.start { width: 60px; flex: none; display: flex; align-items: center; padding-left: 7px; }
.tb-btn {
  width: 121px; flex: none; display: flex; align-items: center; gap: 4px; padding-left: 8px;
  border: 1px solid #1c1f28; border-radius: 3px;
  background: linear-gradient(rgba(255,255,255,.08), rgba(255,255,255,0) 30%, rgba(255,255,255,.03));
  white-space: nowrap;
}
.tb-btn span { color: #c4c7cc; }
.tb-slot { width: 58px; flex: none; display: flex; align-items: center; justify-content: center; }
.folder { width: 122px; margin-left: 2px; gap: 5px; }
.skype { margin-left: 3px; width: 120px; padding-left: 7px; gap: 5px; }
.active-app {
  width: 119px; margin-left: 3px; padding-left: 7px; gap: 3px;
  border-color: #8a8d96;
  background: linear-gradient(#50545e 0, #2a2e38 40%, #10141c 60%, #2a3644);
}
.active-app span { color: #e0e2e6; }
.lang { width: 60px; padding: 11px 0 0 13px; flex: none; }
.tray { display: flex; align-items: center; padding-top: 2px; }
.clock { width: 106px; margin-left: 0; display: flex; flex-direction: column; align-items: center; justify-content: center; gap: 5px; font-size: 11px; color: #bfc2c8; padding-top: 1px; }
.show-desktop { width: 13px; margin-left: auto; border: 1px solid #2a2d36; background: #0c0f16; }
```
